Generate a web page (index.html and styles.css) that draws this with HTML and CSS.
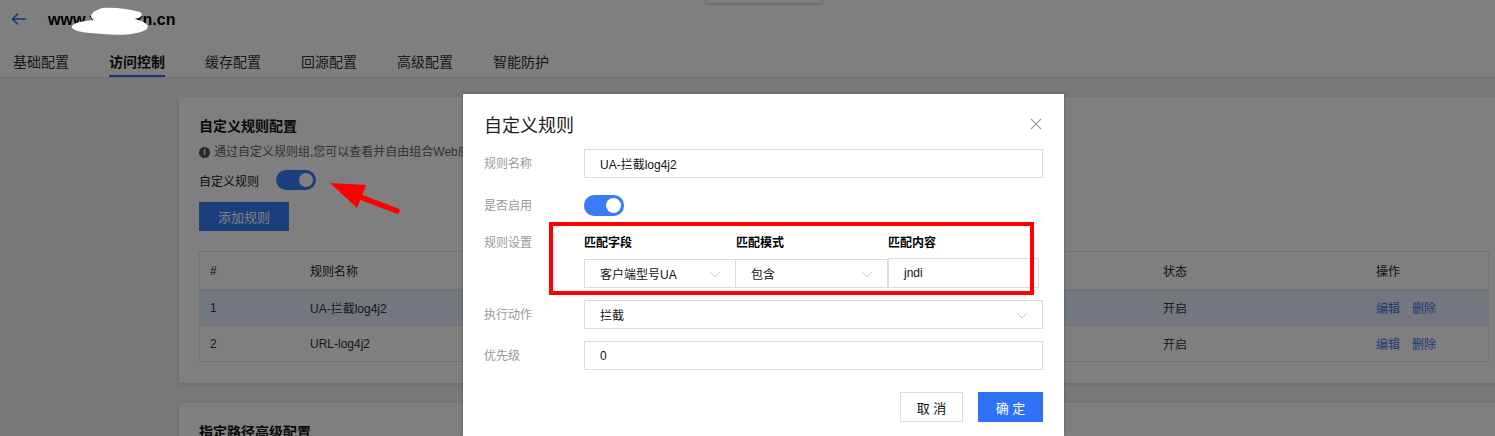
FILE: index.html
```html
<!DOCTYPE html>
<html lang="zh-CN">
<head>
<meta charset="utf-8">
<title>访问控制</title>
<link rel="stylesheet" href="styles.css">
</head>
<body>
<div class="page">
  <div class="top-pop"></div>
  <header class="header">
    <div class="title-row">
      <svg class="back" width="16" height="14" viewBox="0 0 16 14"><path d="M15 7H2M7 1.5L1.5 7 7 12.5" fill="none" stroke="#2e6bea" stroke-width="1.6"/></svg>
      <span class="domain">www.xxxxxxn.cn</span>
    </div>
    <nav class="tabs">
      <span class="tab">基础配置</span>
      <span class="tab active">访问控制</span>
      <span class="tab">缓存配置</span>
      <span class="tab">回源配置</span>
      <span class="tab">高级配置</span>
      <span class="tab">智能防护</span>
    </nav>
  </header>
  <main class="main">
    <section class="card">
      <h3 class="card-title">自定义规则配置</h3>
      <p class="info"><span class="info-icon">!</span>通过自定义规则组,您可以查看并自由组合Web应用防护规则，对请求进行精细化的访问控制与拦截处理</p>
      <div class="switch-row">
        <span>自定义规则</span>
        <span class="switch on"><span class="knob"></span></span>
      </div>
      <button class="btn-primary add">添加规则</button>
      <div class="table">
        <div class="tr th"><span>#</span><span>规则名称</span><span>状态</span><span>操作</span></div>
        <div class="tr hl"><span>1</span><span>UA-拦截log4j2</span><span>开启</span><span><a class="lnk">编辑</a><a class="lnk">删除</a></span></div>
        <div class="tr"><span>2</span><span>URL-log4j2</span><span>开启</span><span><a class="lnk">编辑</a><a class="lnk">删除</a></span></div>
      </div>
    </section>
    <section class="card short">
      <h3 class="card-title">指定路径高级配置</h3>
    </section>
  </main>
</div>

<div class="mask"></div>

<div class="modal">
  <div class="modal-head">
    <span class="modal-title">自定义规则</span>
    <svg class="close" width="12" height="12" viewBox="0 0 12 12"><path d="M1 1L11 11M11 1L1 11" stroke="#a0a0a0" stroke-width="1.1"/></svg>
  </div>
  <div class="form-row r1">
    <label>规则名称</label>
    <div class="input">UA-拦截log4j2</div>
  </div>
  <div class="form-row r2">
    <label>是否启用</label>
    <span class="switch on bright"><span class="knob"></span></span>
  </div>
  <div class="form-row r3">
    <label>规则设置</label>
    <div class="rules">
      <div class="rule-head"><span>匹配字段</span><span>匹配模式</span><span>匹配内容</span></div>
      <div class="rule-fields">
        <div class="select w1">客户端型号UA<svg class="chev" width="12" height="7" viewBox="0 0 12 7"><path d="M1 1l5 5 5-5" fill="none" stroke="#c8c8c8"/></svg></div>
        <div class="select w2">包含<svg class="chev" width="12" height="7" viewBox="0 0 12 7"><path d="M1 1l5 5 5-5" fill="none" stroke="#c8c8c8"/></svg></div>
        <div class="input w3">jndi</div>
      </div>
    </div>
  </div>
  <div class="form-row r4">
    <label>执行动作</label>
    <div class="select">拦截<svg class="chev" width="12" height="7" viewBox="0 0 12 7"><path d="M1 1l5 5 5-5" fill="none" stroke="#c8c8c8"/></svg></div>
  </div>
  <div class="form-row r5">
    <label>优先级</label>
    <div class="input">0</div>
  </div>
  <div class="modal-foot">
    <button class="btn-cancel">取 消</button>
    <button class="btn-ok">确 定</button>
  </div>
  <div class="red-box"></div>
</div>

<svg class="redact" width="90" height="30" viewBox="0 0 90 30"><path d="M32 1 C46 0 58 2 70 5 C74 8 71 11 64 12 C74 14 80 18 77 22 C70 27 52 29 32 27 C20 26 5 25 2 21 C1 16 12 14 24 13 C20 11 20 7 25 4 Z" fill="#fff"/></svg>

<svg class="anno-arrow" width="90" height="45" viewBox="0 0 90 45"><path d="M67 29 L25 13" stroke="#f00" stroke-width="5.5" stroke-linecap="round"/><path d="M0 1 L36 3 L27 26 Z" fill="#f00"/></svg>
</body>
</html>
```

FILE: styles.css
```css
* { box-sizing: border-box; }
html, body { margin: 0; padding: 0; }
body {
  width: 1495px;
  height: 436px;
  overflow: hidden;
  background: #f0f0f0;
  font-family: "Liberation Sans", "Noto Sans CJK SC", sans-serif;
  color: #333;
  position: relative;
}
.page { position: relative; }
.top-pop {
  position: absolute;
  left: 706px; top: -20px;
  width: 116px; height: 23px;
  background: #fff;
  border-radius: 3px;
  box-shadow: 0 1px 3px rgba(0,0,0,0.25);
  z-index: 2;
}
.header {
  background: #fff;
  height: 78px;
  border-bottom: 1px solid #dedede;
  padding: 0 0 0 11px;
}
.title-row {
  height: 40px;
  display: flex;
  align-items: center;
}
.back { margin: 0 0 2px 0; }
.domain {
  margin-left: 21px;
  font-weight: bold;
  font-size: 16px;
  color: #000;
  line-height: 20px;
}
.tabs {
  display: flex;
  gap: 40px;
  padding-left: 2px;
  height: 37px;
  align-items: flex-start;
}
.tab {
  font-size: 14px;
  line-height: 20px;
  padding-top: 12px;
  height: 37px;
  color: #333;
  width: 56px;
  white-space: nowrap;
}
.tab.active {
  font-weight: bold;
  color: #111;
  border-bottom: 2px solid #2e6bea;
}
.main { padding: 19px 0 0 179px; }
.card {
  width: 1330px;
  background: #fff;
  padding: 19px 20px 21px;
  box-shadow: 0 1px 3px rgba(0,0,0,0.12);
  margin-bottom: 20px;
}
.card.short { height: 34px; padding-bottom: 0; }
.card-title {
  margin: 0;
  font-size: 14px;
  line-height: 20px;
  font-weight: bold;
  color: #111;
}
.info {
  margin: 8px 0 0;
  font-size: 12px;
  line-height: 16px;
  color: #666;
  display: flex;
  align-items: center;
  white-space: nowrap;
}
.info-icon {
  width: 11px; height: 11px;
  border-radius: 50%;
  background: #555;
  color: #fff;
  font-size: 9px;
  line-height: 11px;
  text-align: center;
  font-weight: bold;
  margin-right: 4px;
}
.switch-row {
  margin-top: 10px;
  height: 20px;
  display: flex;
  align-items: center;
  font-size: 12px;
  color: #222;
}
.switch-row .switch { margin-left: 17px; }
.switch {
  display: inline-block;
  width: 40px; height: 20px;
  border-radius: 10px;
  background: #3a7cfa;
  position: relative;
}
.switch .knob {
  position: absolute;
  right: 3px; top: 3px;
  width: 14px; height: 14px;
  border-radius: 50%;
  background: #fff;
}
.switch.bright { width: 40px; height: 21px; background: #3a7bf7; }
.switch.bright .knob { width: 15px; height: 15px; top: 3px; right: 3px; }
.btn-primary {
  display: block;
  margin-top: 12px;
  width: 90px; height: 29px;
  border: none;
  background: #3a7cfa;
  color: #fff;
  font-family: inherit;
  font-size: 13px;
  padding: 0;
}
.table {
  margin-top: 20px;
  border: 1px solid #e6e6e6;
  width: 1290px;
  font-size: 12px;
}
.tr {
  display: grid;
  grid-template-columns: 100px 853px 213px 1fr;
  height: 36px;
  align-items: center;
  border-top: 1px solid #e6e6e6;
  padding-left: 10px;
  color: #333;
}
.tr.th { border-top: none; height: 37px; color: #222; }
.tr.hl { background: #e7f0fd; }
.lnk { color: #3f74ee; margin-right: 12px; }
.mask {
  position: absolute;
  inset: 0;
  background: rgba(0,0,0,0.5);
  z-index: 5;
}
.modal {
  position: absolute;
  left: 463px; top: 94px;
  width: 601px; height: 342px;
  background: #fff;
  z-index: 6;
  padding: 20px 21px 0;
  box-shadow: 0 0 3px rgba(0,0,0,0.3);
  font-size: 12px;
}
.modal-head {
  display: flex;
  justify-content: space-between;
  align-items: center;
  height: 24px;
  margin-bottom: 11px;
}
.modal-title { font-size: 18px; line-height: 24px; color: #222; }
.close { margin-right: 1px; margin-top: -4px; }
.form-row {
  display: grid;
  grid-template-columns: 100px 459px;
  align-items: center;
}
.form-row label { color: #999; line-height: 16px; }
.input, .select {
  height: 29px;
  border: 1px solid #dcdcdc;
  padding: 0 15px;
  display: flex;
  align-items: center;
  color: #111;
  position: relative;
}
.chev { position: absolute; right: 14px; top: 11px; }
.r2 { margin-top: 17px; height: 21px; }
.r3 { margin-top: 19px; align-items: start; }
.rule-head {
  display: grid;
  grid-template-columns: 152px 152px 151px;
  font-weight: bold;
  color: #000;
  line-height: 16px;
}
.rule-fields {
  margin-top: 8px;
  display: grid;
  grid-template-columns: 152px 152px 151px;
}
.rule-fields .w2 { border-left: none; }
.rule-fields .w3 { border-left: 1px solid #dcdcdc; margin-top: -1px; height: 30px; }
.r4 { margin-top: 12px; }
.r5 { margin-top: 12px; }
.modal-foot {
  margin-top: 22px;
  display: flex;
  justify-content: flex-end;
  gap: 15px;
  width: 559px;
}
.modal-foot button {
  height: 30px;
  font-family: inherit;
  font-size: 13px;
  padding: 0;
}
.btn-cancel { width: 63px; background: #fff; border: 1px solid #dcdcdc; color: #111; }
.btn-ok { width: 65px; background: #3072f6; border: none; color: #fff; }
.red-box {
  position: absolute;
  left: 86px; top: 128px;
  width: 485px; height: 73px;
  border: 4px solid #f00;
}
.redact {
  position: absolute;
  left: 70px; top: 7px;
  z-index: 8;
}
.anno-arrow {
  position: absolute;
  left: 330px; top: 182px;
  z-index: 8;
}
```
